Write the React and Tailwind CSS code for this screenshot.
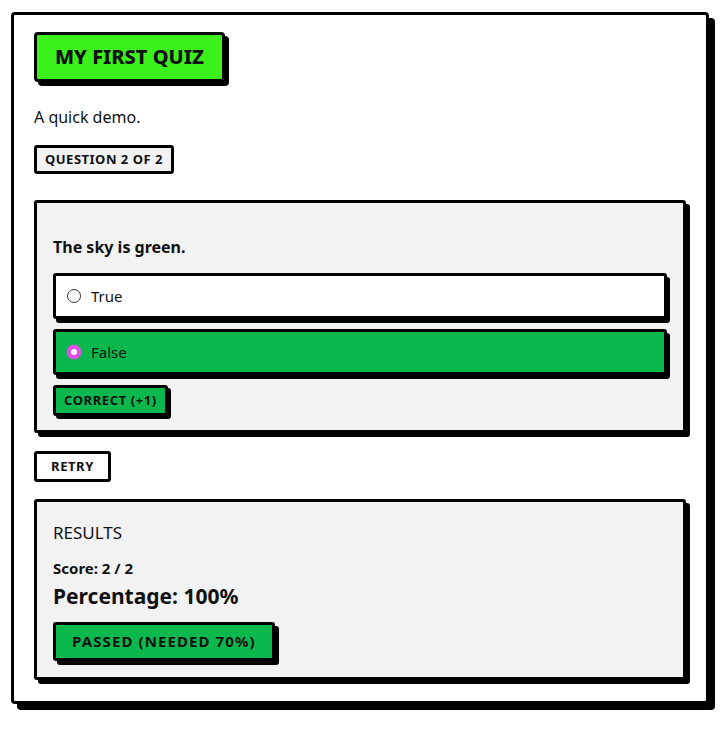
import { useState } from "react";

const questions = [
  { text: "The sky is blue.", options: ["True", "False"], answer: 0 },
  { text: "The sky is green.", options: ["True", "False"], answer: 1 },
];

function Radio({ checked }) {
  if (checked) {
    return (
      <span className="flex h-[14px] w-[14px] items-center justify-center rounded-full bg-[#e14fe8] shadow-[0_0_2px_#e14fe8]">
        <span className="h-[6px] w-[6px] rounded-full bg-white" />
      </span>
    );
  }
  return <span className="h-[14px] w-[14px] rounded-full border border-[#333] bg-white" />;
}

export default function App() {
  const [current] = useState(1);
  const [picked] = useState(1);
  const q = questions[current];
  const score = 2;
  const pct = Math.round((score / questions.length) * 100);

  return (
    <div className="min-h-screen bg-white pl-[11px] pt-[12px] text-[#111] font-['Noto_Sans',sans-serif]">
      <div className="w-[698px] rounded-[4px] border-[3px] border-black bg-white px-5 pt-[17px] pb-[21px] shadow-[6px_6px_0_#000]">
        {/* quiz title */}
        <div className="inline-block rounded-[4px] border-[3px] border-black bg-[#3cf01c] px-[18px] py-[9px] text-[20px] leading-[26px] font-extrabold shadow-[4px_4px_0_#000]">
          MY FIRST QUIZ
        </div>
        <p className="mt-[25px] text-[16px] leading-5">A quick demo.</p>
        <div className="mt-[18px] inline-block rounded-[3px] border-[3px] border-black bg-[#f2f2f2] px-[8px] py-[2px] text-[13px] leading-[19px] font-bold tracking-[0.5px]">
          QUESTION {current + 1} OF {questions.length}
        </div>

        {/* question card */}
        <div className="mt-[26px] w-[652px] rounded-[3px] border-[3px] border-black bg-[#f2f2f2] px-4 pt-[34px] pb-[14px] shadow-[4px_4px_0_#000]">
          <h2 className="text-[16px] leading-5 font-bold">{q.text}</h2>
          <div className="mt-[16px] flex flex-col gap-[10px]">
            {q.options.map((opt, i) => (
              <label
                key={opt}
                className={
                  "flex h-[46px] items-center gap-[10px] rounded-[3px] border-[3px] border-black pl-[11px] text-[15px] shadow-[3px_4px_0_#000] " +
                  (picked === i ? "bg-[#0bb84e]" : "bg-white")
                }
              >
                <Radio checked={picked === i} />
                <span>{opt}</span>
              </label>
            ))}
          </div>
          <div className="mt-[10px] inline-block rounded-[3px] border-[3px] border-black bg-[#0bb84e] px-[8px] py-[4px] text-[13px] leading-[17px] font-bold tracking-[0.6px] shadow-[3px_3px_0_#000]">
            CORRECT (+1)
          </div>
        </div>

        <button className="mt-[18px] block rounded-[3px] border-[3px] border-black bg-white px-[14px] py-[4px] text-[13px] leading-[17px] font-bold tracking-[0.6px]">
          RETRY
        </button>

        {/* results */}
        <div className="mt-[17px] w-[652px] rounded-[3px] border-[3px] border-black bg-[#f2f2f2] px-4 pt-[19px] pb-[16px] shadow-[4px_4px_0_#000]">
          <h3 className="text-[17px] leading-6">RESULTS</h3>
          <p className="mt-[13px] text-[15px] leading-5 font-bold">
            Score: {score} / {questions.length}
          </p>
          <p className="mt-[4px] text-[21px] leading-[28px] font-bold">Percentage: {pct}%</p>
          <div className="mt-[12px] inline-block rounded-[3px] border-[3px] border-black bg-[#0bb84e] px-[16px] py-[7px] text-[15px] leading-[19px] font-bold tracking-[1.1px] shadow-[4px_4px_0_#000]">
            PASSED (NEEDED 70%)
          </div>
        </div>
      </div>
    </div>
  );
}
